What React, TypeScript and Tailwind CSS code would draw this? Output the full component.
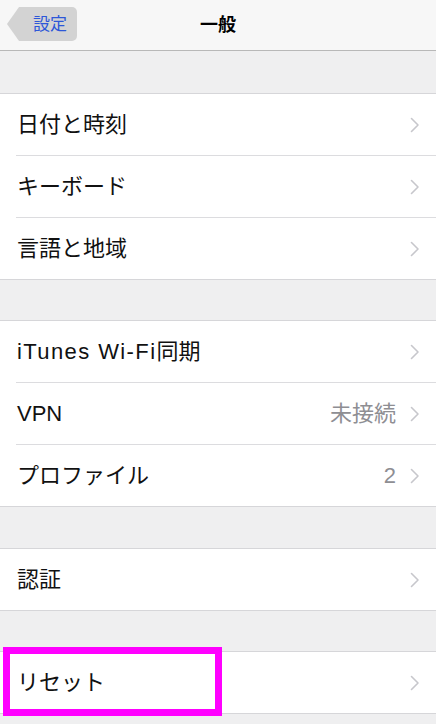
import React from "react";

const FONT = '"Liberation Sans", "Noto Sans CJK JP", sans-serif';

function Chevron() {
  return (
    <svg width="10" height="16" viewBox="0 0 10 16" className="shrink-0">
      <path d="M1.5 1.5 L8 8 L1.5 14.5" fill="none" stroke="#c7c7cc" strokeWidth="1.6" strokeLinecap="round" strokeLinejoin="round" />
    </svg>
  );
}

type RowData = { key: string; label: React.ReactNode; value?: string };

function Row({ label, value, last }: { label: React.ReactNode; value?: string; last?: boolean }) {
  return (
    <div className="flex flex-col bg-white">
      <div className="flex h-[61px] items-center pl-[17px] pr-[16px]">
        <span className="flex-1 text-[22px] text-[#111] leading-none">{label}</span>
        {value && <span className="mr-[14px] text-[22px] text-[#8e8e93] leading-none">{value}</span>}
        <Chevron />
      </div>
      {!last && <div className="ml-[16px] h-px bg-[#dcdcdf]" />}
    </div>
  );
}

function Group({ rows }: { rows: RowData[] }) {
  return (
    <div className="border-y border-[#d6d6d9] bg-white">
      {rows.map((r, i) => (
        <Row key={r.key} label={r.label} value={r.value} last={i === rows.length - 1} />
      ))}
    </div>
  );
}

export default function App() {
  return (
    <div className="relative h-[724px] w-[436px] overflow-hidden bg-[#efeff0]" style={{ fontFamily: FONT }}>
      <div className="relative flex h-[51px] items-center justify-center border-b border-[#b8b8b8] bg-[#f7f7f7]">
        <div className="absolute left-[7px] top-[7px] flex h-[34px] items-center">
          <svg width="14" height="34" viewBox="0 0 14 34" className="shrink-0">
            <path d="M14 0 L12 0 L0 17 L12 34 L14 34 Z" fill="#d3d3d3" />
          </svg>
          <div className="flex h-[34px] items-center rounded-r-[5px] bg-[#d3d3d3] pl-[12px] pr-[10px]">
            <span className="text-[17px] text-[#2d57d8] leading-none">設定</span>
          </div>
        </div>
        <span className="text-[18px] font-bold text-black leading-none">一般</span>
      </div>
      <div className="h-[42px]" />
      <Group
        rows={[
          { key: "a", label: "日付と時刻" },
          { key: "b", label: "キーボード" },
          { key: "c", label: "言語と地域" },
        ]}
      />
      <div className="h-[40px]" />
      <Group
        rows={[
          {
            key: "d",
            label: (
              <>
                <span className="tracking-[1.4px]">iTunes Wi-Fi</span>同期
              </>
            ),
          },
          { key: "e", label: "VPN", value: "未接続" },
          { key: "f", label: "プロファイル", value: "2" },
        ]}
      />
      <div className="h-[41px]" />
      <Group rows={[{ key: "g", label: "認証" }]} />
      <div className="h-[40px]" />
      <Group rows={[{ key: "h", label: "リセット" }]} />
      <div className="pointer-events-none absolute left-[3px] top-[647px] h-[69px] w-[219px] border-[7px] border-[#ff00ff]" />
    </div>
  );
}
